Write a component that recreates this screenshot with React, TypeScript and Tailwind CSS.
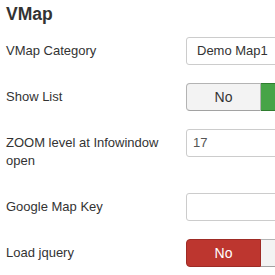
import type { ReactNode } from "react";

type Row = {
  label: string;
  control: ReactNode;
  tall?: boolean;
};

function TextBox({ value, padLeft = "pl-[6px]", color = "text-[#555]" }: { value?: string; padLeft?: string; color?: string }) {
  return (
    <div
      className={`flex h-[28px] w-[220px] items-center rounded-[3px] border border-[#cccccc] bg-white ${padLeft} ${color}`}
    >
      {value}
    </div>
  );
}

// the "Yes" half runs past the right edge of the shot, so only its colour shows
function Toggle({ active }: { active: "yes" | "no" }) {
  const noActive = active === "no";
  return (
    <div className="flex h-[28px] text-[14px]">
      <div
        className={`flex w-[75px] shrink-0 items-center justify-center rounded-l-[4px] border ${
          noActive
            ? "border-[#9e2b25] bg-[#bd362f] text-white"
            : "border-[#b3b3b3] border-b-[#a2a2a2] bg-[#f3f3f3] text-[#333]"
        }`}
      >
        No
      </div>
      <div
        aria-label="Yes"
        className={`w-[75px] shrink-0 rounded-r-[4px] border border-l-0 ${
          noActive
            ? "border-[#b3b3b3] border-b-[#a2a2a2] bg-[#f3f3f3]"
            : "border-[#2f7d2f] border-l border-l-[#2f7d2f] bg-[#47a447]"
        }`}
      />
    </div>
  );
}

const rows: Row[] = [
  {
    label: "VMap Category",
    control: <TextBox value="Demo Map1" padLeft="pl-[10px]" color="text-[#333]" />,
  },
  { label: "Show List", control: <Toggle active="yes" /> },
  { label: "ZOOM level at Infowindow open", control: <TextBox value="17" />, tall: true },
  { label: "Google Map Key", control: <TextBox /> },
  { label: "Load jquery", control: <Toggle active="no" /> },
];

export default function App() {
  return (
    <div className="h-[275px] w-[275px] overflow-hidden bg-white px-[6px] font-['Liberation_Sans',Arial,sans-serif] text-[13px] text-[#333]">
      <h2 className="mb-[13px] pt-[4px] text-[17.5px] font-bold leading-[20px] text-[#333]">VMap</h2>

      {rows.map((row) => (
        <div key={row.label} className="mb-[18px] flex">
          <div className={`w-[160px] shrink-0 pt-[5px] leading-[18px] ${row.tall ? "pb-[5px]" : ""}`}>
            {row.label}
          </div>
          <div className="ml-[20px] shrink-0">{row.control}</div>
        </div>
      ))}
    </div>
  );
}
